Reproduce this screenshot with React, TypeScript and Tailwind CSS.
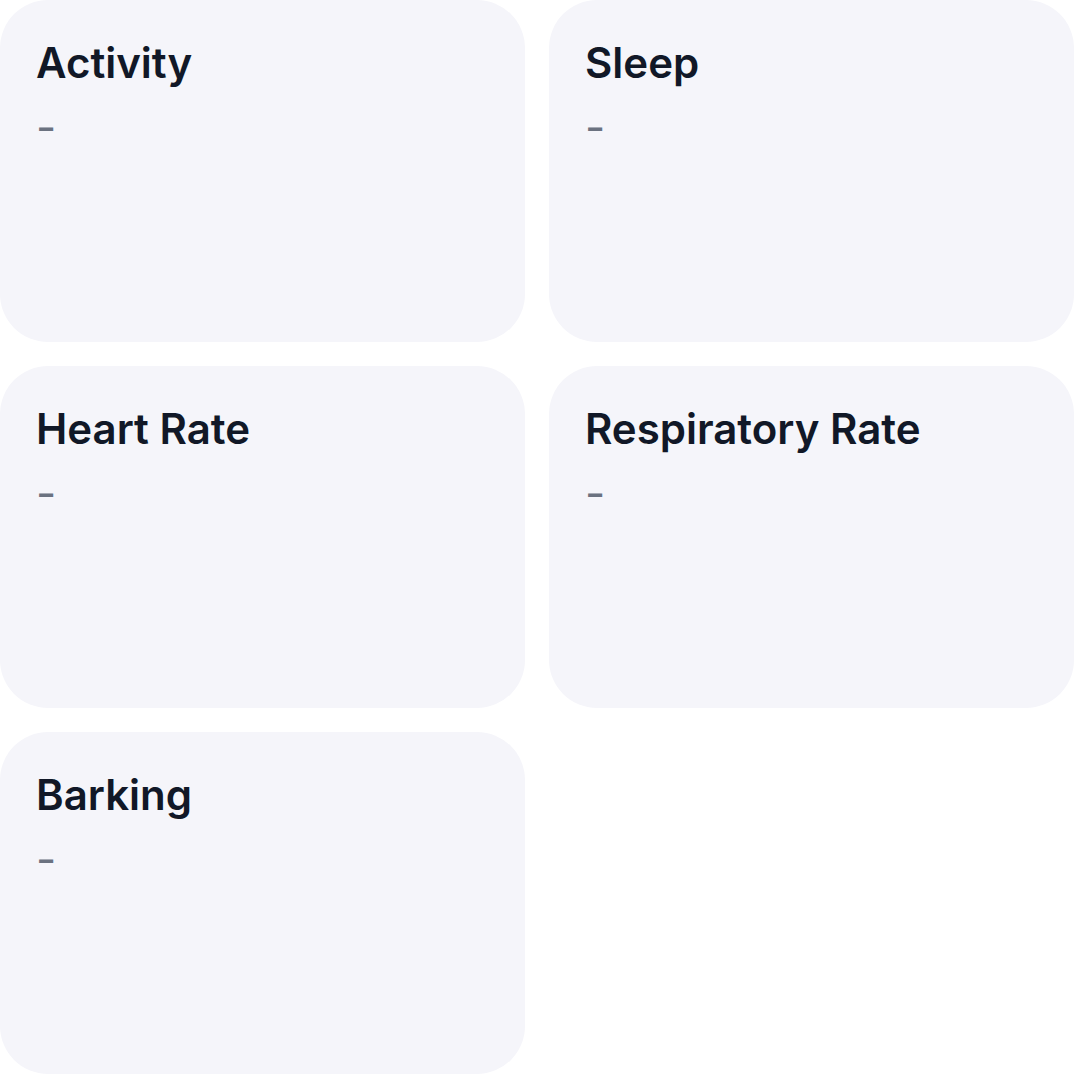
import React from 'react'

const metrics = ['Activity', 'Sleep', 'Heart Rate', 'Respiratory Rate', 'Barking']

export default function App() {
  return (
    <div className="grid h-[1074px] w-[1074px] grid-cols-2 grid-rows-3 gap-6 bg-white font-['Inter',sans-serif]">
      {metrics.map((name) => (
        <div key={name} className="rounded-[48px] bg-[#f5f5fa] px-9 pt-[38px]">
          <h3 className="text-[42px] leading-[1.2] font-semibold text-[#111827]">{name}</h3>
          <p className="mt-[17px] text-[44px] leading-none text-[#6b7280]">-</p>
        </div>
      ))}
    </div>
  )
}
